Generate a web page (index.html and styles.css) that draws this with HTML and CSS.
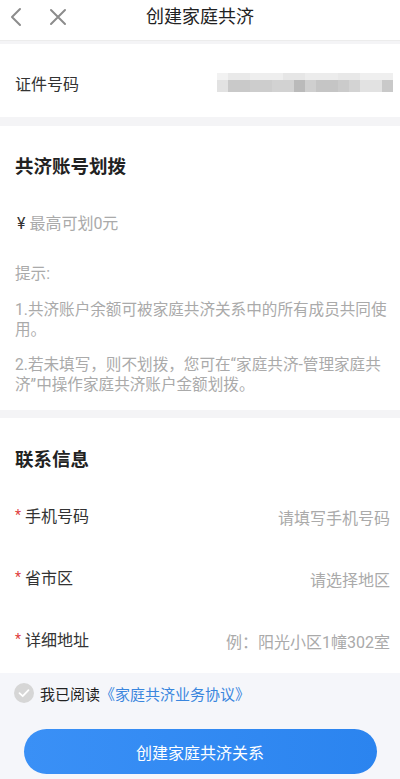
FILE: index.html
```html
<!DOCTYPE html>
<html lang="zh-CN">
<head>
  <meta charset="UTF-8">
  <meta name="viewport" content="width=device-width, initial-scale=1.0">
  <title>创建家庭共济</title>
  <link rel="stylesheet" href="styles.css">
</head>
<body>
  <header class="topbar">
    <div class="topbar-icons">
      <svg class="icon" width="16" height="20" viewBox="0 0 16 20"><path d="M11 2 L3 10 L11 18" fill="none" stroke="#8c8c8c" stroke-width="2" stroke-linecap="round" stroke-linejoin="round"/></svg>
      <svg class="icon" width="18" height="18" viewBox="0 0 18 18"><path d="M2 2 L16 16 M16 2 L2 16" fill="none" stroke="#8c8c8c" stroke-width="2" stroke-linecap="round"/></svg>
    </div>
    <h1 class="title">创建家庭共济</h1>
  </header>

  <section class="card card-id">
    <div class="id-row">
      <span class="label">证件号码</span>
      <div class="blur">
        <div class="blur-top"></div>
        <div class="blur-bottom"></div>
      </div>
    </div>
  </section>

  <section class="card card-transfer">
    <h2 class="section-title">共济账号划拨</h2>
    <div class="amount"><span class="yen">¥</span> 最高可划0元</div>
    <p class="hint-title">提示:</p>
    <p class="hint">1.共济账户余额可被家庭共济关系中的所有成员共同使用。</p>
    <p class="hint">2.若未填写，则不划拨，您可在“家庭共济-管理家庭共济”中操作家庭共济账户金额划拨。</p>
  </section>

  <section class="card card-contact">
    <h2 class="section-title">联系信息</h2>
    <div class="field"><span class="label"><i class="star">*</i>手机号码</span><span class="placeholder">请填写手机号码</span></div>
    <div class="field"><span class="label"><i class="star">*</i>省市区</span><span class="placeholder">请选择地区</span></div>
    <div class="field"><span class="label"><i class="star">*</i>详细地址</span><span class="placeholder">例：阳光小区1幢302室</span></div>
  </section>

  <footer class="bottom">
    <div class="agree">
      <svg class="check" width="20" height="20" viewBox="0 0 20 20"><circle cx="10" cy="10" r="10" fill="#d6d6d6"/><path d="M5.5 10.2 L8.7 13.2 L14.5 7.2" fill="none" stroke="#fff" stroke-width="1.8" stroke-linecap="round" stroke-linejoin="round"/></svg>
      <span>我已阅读</span><span class="link">《家庭共济业务协议》</span>
    </div>
    <button class="submit">创建家庭共济关系</button>
  </footer>
</body>
</html>
```

FILE: styles.css
```css
body {
  margin: 0;
  width: 400px;
  background: #f4f4f6;
  font-family: Roboto, "Noto Sans CJK SC", sans-serif;
  color: #222;
}
.topbar {
  position: relative;
  height: 41px;
  background: #fff;
  border-bottom: 1px solid #ececec;
  display: flex;
  justify-content: center;
  box-sizing: border-box;
  padding-top: 5px;
}
.topbar-icons {
  position: absolute;
  left: 9px;
  top: 7px;
  display: flex;
  gap: 24px;
  align-items: center;
}
.title {
  margin: 0;
  font-size: 18px;
  line-height: 24px;
  font-weight: 400;
  color: #222;
}
.card {
  background: #fff;
  padding: 0 15px;
}
.card-id {
  margin-top: 3px;
  padding-top: 29px;
  padding-bottom: 20px;
}
.id-row {
  display: flex;
  align-items: center;
  justify-content: space-between;
  height: 24px;
  margin-right: -8px;
}
.label {
  font-size: 16px;
  color: #333;
  line-height: 24px;
}
.blur {
  width: 176px;
  margin-top: -5px;
}
.blur-top {
  height: 7px;
  background: linear-gradient(90deg, #f2f2f2 0 11px, #e9e9e9 11px 33px, #eeeeee 33px 66px, #e6e6e6 66px 88px, #ececec 88px 121px, #e8e8e8 121px 143px, #efefef 143px 176px);
}
.blur-bottom {
  height: 12px;
  background: linear-gradient(90deg, #e2e2e2 0 11px, #c9c9c9 11px 33px, #cdcdcd 33px 55px, #d2d2d2 55px 77px, #bababa 77px 88px, #cfcfcf 88px 99px, #c5c5c5 99px 121px, #cbcbcb 121px 132px, #d3d3d3 132px 143px, #e2e2e2 143px 165px, #c9c9c9 165px 176px);
}
.card-transfer {
  margin-top: 9px;
  padding-top: 28px;
  padding-bottom: 15px;
  padding-right: 10px;
}
.section-title {
  margin: 0;
  font-size: 18.5px;
  line-height: 26px;
  font-weight: 700;
  color: #222;
}
.amount {
  margin-top: 32px;
  font-size: 16px;
  line-height: 24px;
  color: #aaa;
}
.yen {
  color: #333;
  margin-left: 2px;
}
.hint-title {
  margin: 27px 0 0;
  font-size: 15.6px;
  line-height: 22px;
  color: #aaa;
}
.hint {
  margin: 15px 0 0;
  font-size: 15.6px;
  line-height: 20px;
  color: #aaa;
}
.card-contact {
  margin-top: 8px;
  padding-top: 29px;
  padding-bottom: 1px;
  padding-left: 15px;
  padding-right: 10px;
}
.card-contact .section-title {
  margin-bottom: 13px;
}
.field {
  height: 62px;
  display: flex;
  align-items: center;
  justify-content: space-between;
}
.star {
  font-style: normal;
  color: #e04040;
  font-size: 14px;
  margin-right: 4px;
  position: relative;
  top: -2px;
}
.placeholder {
  font-size: 16px;
  color: #aaa;
}
.bottom {
  background: #f5f6fa;
  height: 106px;
  padding-top: 10px;
  box-sizing: border-box;
}
.agree {
  display: flex;
  align-items: center;
  padding-left: 14px;
  font-size: 15px;
  color: #222;
  height: 20px;
}
.check {
  margin-right: 6px;
}
.link {
  color: #3a86de;
}
.submit {
  display: block;
  margin: 26px auto 0;
  width: 353px;
  height: 45px;
  border: none;
  border-radius: 23px;
  background: linear-gradient(90deg, #3a90f6, #2b84ef);
  color: #fff;
  font-family: inherit;
  font-size: 16px;
}
```
